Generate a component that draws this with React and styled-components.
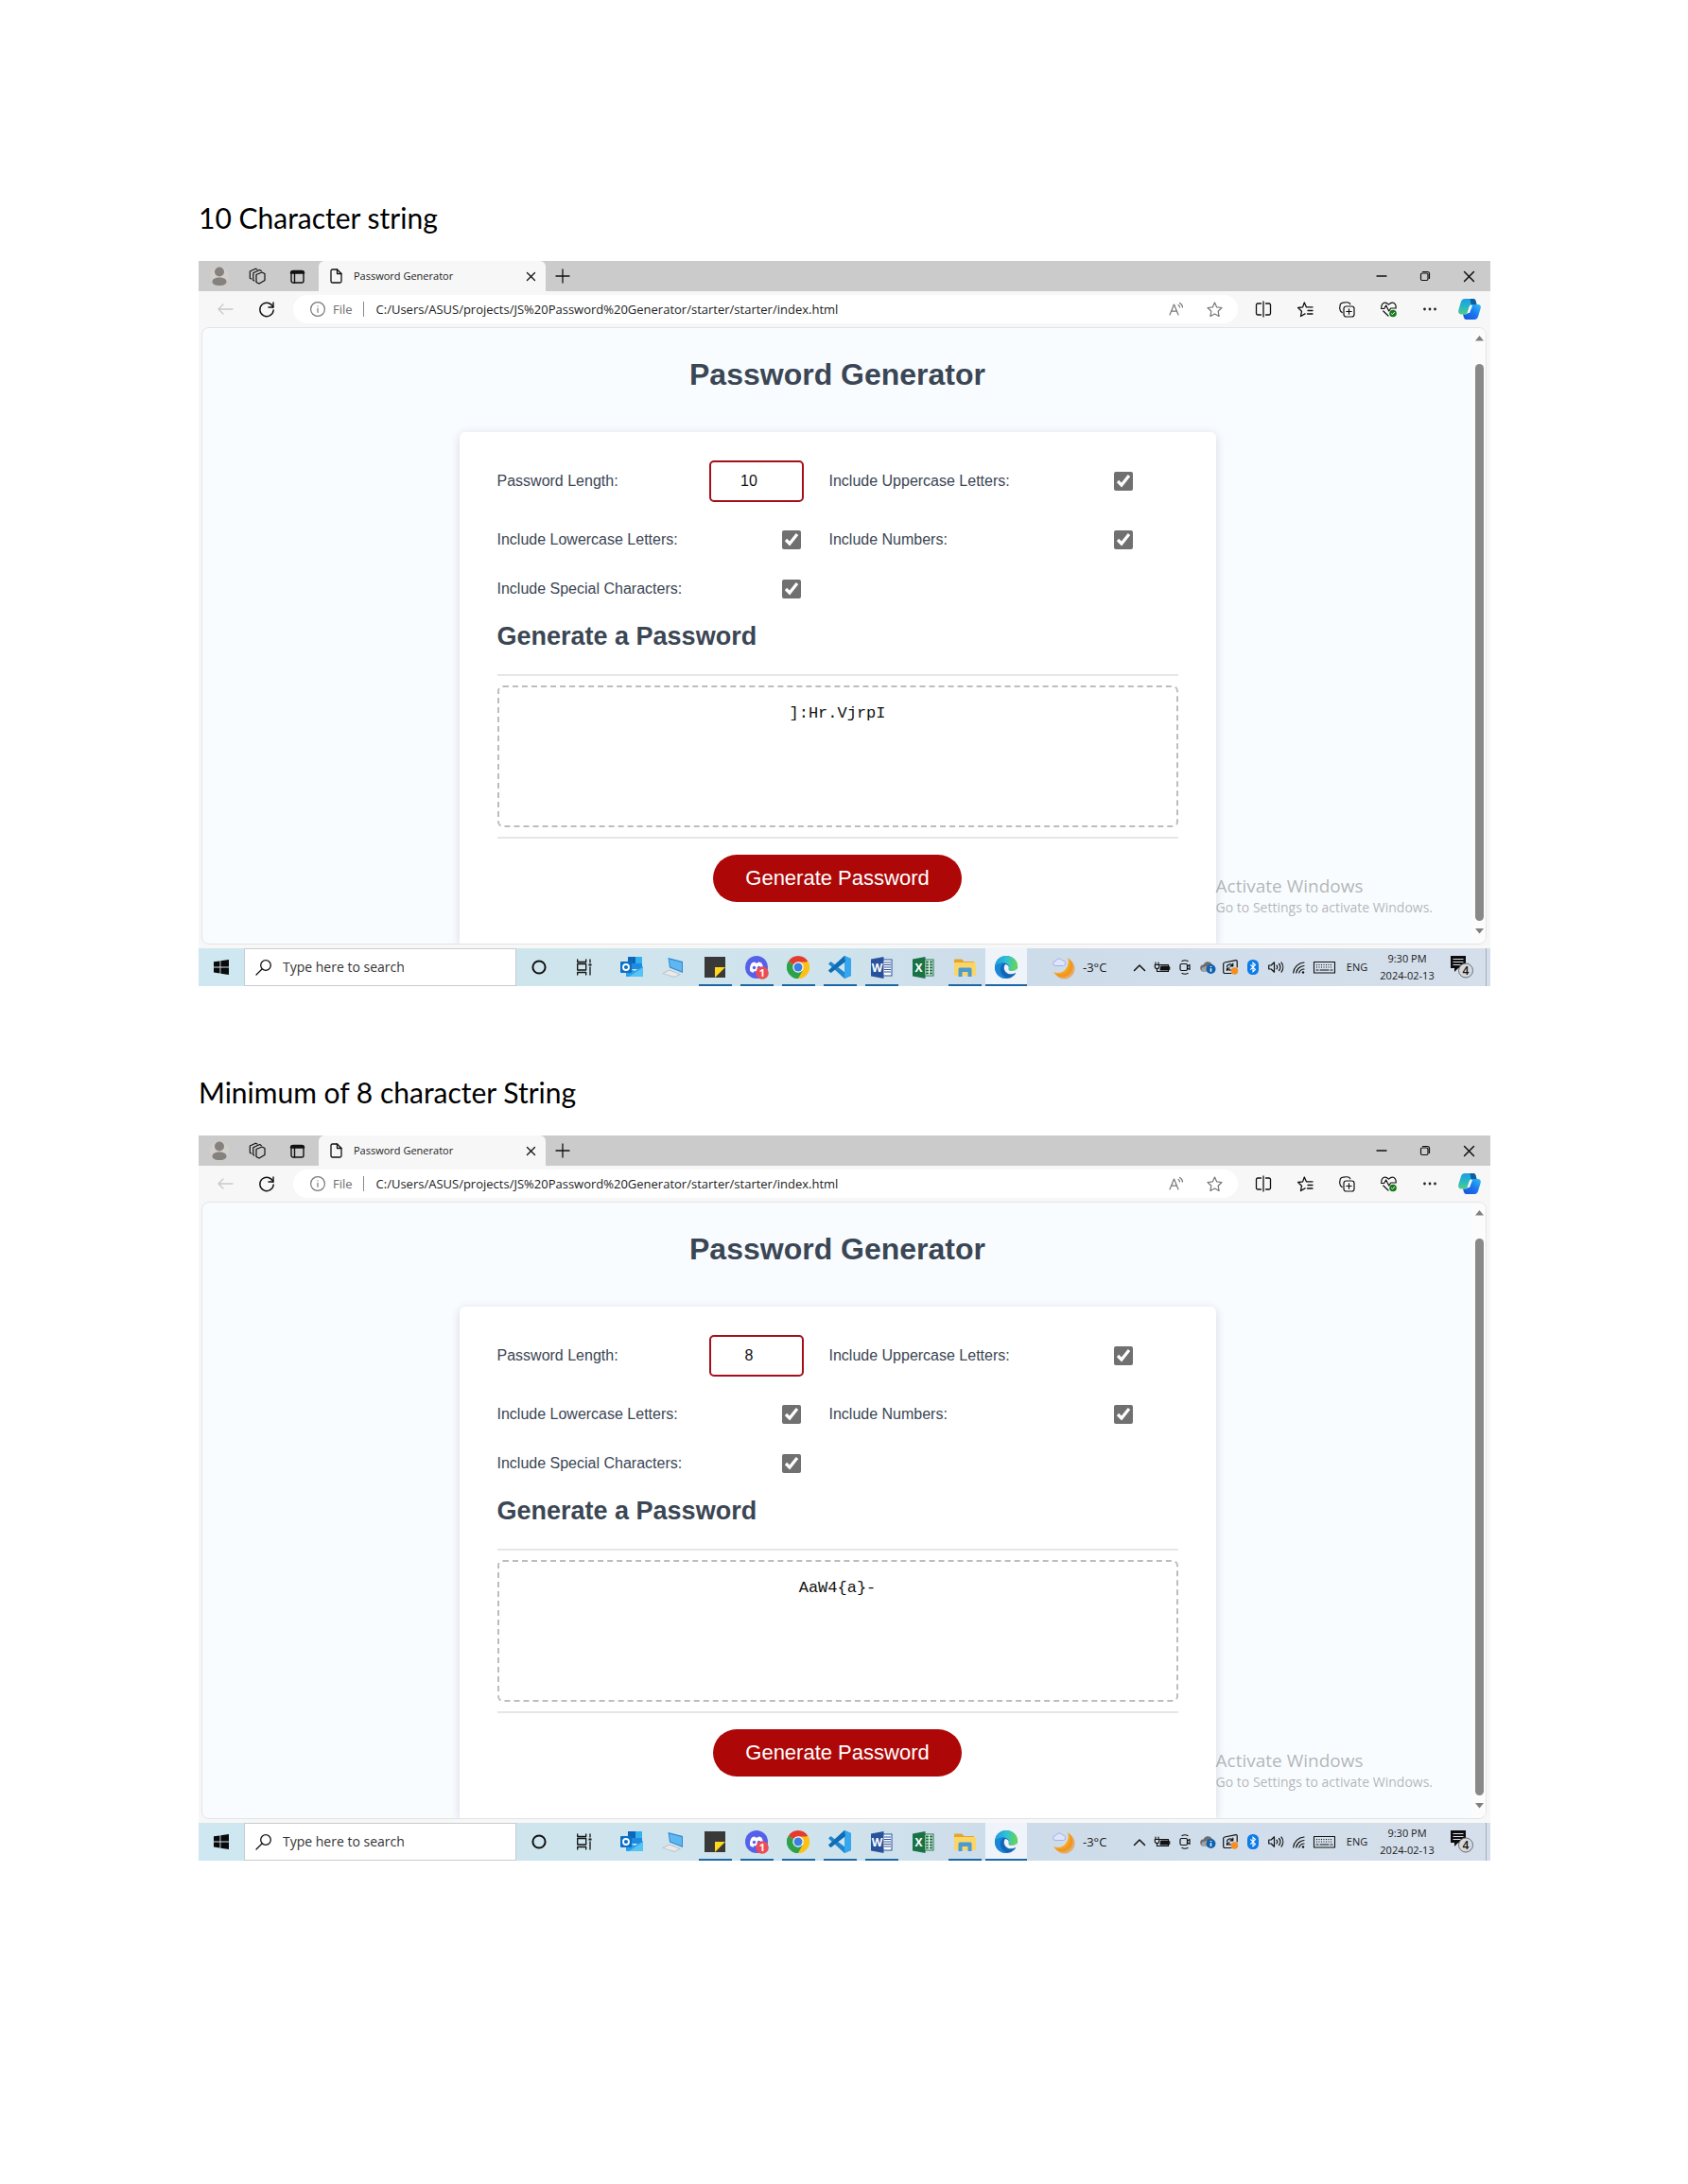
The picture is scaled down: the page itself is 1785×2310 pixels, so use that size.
import React, { useId } from "react";
import styled, { createGlobalStyle } from "styled-components";

const GlobalStyle = createGlobalStyle`
  *, *::before, *::after { box-sizing: border-box; }
  body { margin: 0; background: #fff; }
  button, input, textarea { font: inherit; color: inherit; margin: 0; }
`;

const UI = `"Open Sans", "Noto Sans", sans-serif`;
const ARIAL = `"Liberation Sans", Arial, sans-serif`;

/* ---------- document ---------- */

const Document = styled.main`
  display: flex;
  flex-direction: column;
  gap: 92px;
  padding: 210px 209px 300px 210px;
`;

const Figure = styled.section`
  display: flex;
  flex-direction: column;
  gap: 26px;
`;

const Caption = styled.h2`
  margin: 0;
  font: 400 30px/40px Lato, sans-serif;
  color: #000;
`;

const Desktop = styled.div`
  display: flex;
  flex-direction: column;
  background: #f7f7f7;
  font-family: ${UI};
  color: #1b1b1b;
`;

/* ---------- shared parts ---------- */

const Svg = styled.svg`
  display: block;
  flex: none;
  width: ${(p) => p.$w || 18}px;
  height: ${(p) => p.$h || p.$w || 18}px;
  overflow: visible;
`;

const Line = ({ w = 18, h, box, sw = 1.3, color = "#111", children }) => (
  <Svg
    $w={w}
    $h={h}
    viewBox={box || `0 0 ${w} ${h || w}`}
    fill="none"
    stroke={color}
    strokeWidth={sw}
    strokeLinecap="round"
    strokeLinejoin="round"
    aria-hidden="true"
  >
    {children}
  </Svg>
);

const IconButton = styled.button`
  display: flex;
  flex: none;
  align-items: center;
  justify-content: center;
  width: ${(p) => p.$w}px;
  height: 100%;
  padding: 0;
  border: 0;
  background: transparent;
`;

/* ---------- browser chrome ---------- */

const TabStrip = styled.div`
  display: flex;
  align-items: center;
  height: 32px;
  background: #cbcbcb;
`;

const ProfileTools = styled.div`
  display: flex;
  height: 100%;
  width: 127px;
  padding-left: 2px;
`;

const Tab = styled.div`
  display: flex;
  align-items: center;
  gap: 12px;
  width: 240px;
  height: 100%;
  padding: 0 4px 0 12px;
  border-radius: 6px 6px 0 0;
  background: #f7f7f7;
  font-size: 11px;
  line-height: 18px;
`;

const TabTitle = styled.span`
  flex: 1;
  white-space: nowrap;
`;

const WindowControls = styled.div`
  display: flex;
  height: 100%;
  margin-left: auto;
`;

const Toolbar = styled.div`
  display: flex;
  align-items: center;
  height: 38px;
  padding: 0 2px 0 6px;
`;

const AddressBar = styled.div`
  display: flex;
  align-items: center;
  flex: 1;
  height: 30px;
  margin: 0 5px 0 6px;
  padding: 0 5px 0 18px;
  border-radius: 15px;
  background: #fff;
  font-size: 13px;
  line-height: 20px;
`;

const Scheme = styled.span`
  margin-left: 8px;
  padding-right: 11px;
  border-right: 1px solid #8a8a8a;
  line-height: 16px;
  color: #6e6e6e;
`;

const UrlInput = styled.input`
  flex: 1;
  min-width: 0;
  padding: 0 0 0 13px;
  border: 0;
  background: transparent;
  outline: 0;
`;

/* ---------- web page ---------- */

const Viewport = styled.div`
  position: relative;
  display: flex;
  margin: 0 4px 4px 3px;
  border: 1px solid #e4e4e6;
  border-radius: 8px;
  background: #f8fcff;
  overflow: hidden;
`;

const PageBody = styled.div`
  display: flex;
  flex: 1;
  flex-direction: column;
  align-items: center;
  gap: 41px;
  padding-top: 29px;
  font-family: ${ARIAL};
  color: #3b4654;
`;

const PageTitle = styled.h1`
  margin: 0;
  font-size: 32px;
  line-height: 40px;
`;

const Card = styled.form`
  width: 100%;
  max-width: 800px;
  padding: 16px 40px 44px;
  border-radius: 6px 6px 0 0;
  background: #fff;
  box-shadow: 0 2px 10px rgba(30, 30, 60, 0.16);
`;

const Options = styled.div`
  display: grid;
  grid-template-columns: 45% 45%;
  column-gap: 27px;
  grid-template-rows: 72px;
  grid-auto-rows: 52px;
`;

const Option = styled.div`
  display: flex;
  align-items: center;
  justify-content: space-between;
  font-size: 16px;
  line-height: 20px;
`;

const LengthInput = styled.input`
  width: 100px;
  height: 44px;
  padding: 0 12px;
  border: 2px solid #a3101a;
  border-radius: 5px;
  background: #fff;
  color: #111;
  text-align: center;
  outline: 0;
`;

const Check = styled.input`
  width: 20px;
  height: 20px;
  margin-right: 3px;
  accent-color: #707070;
`;

const CardHeading = styled.h2`
  margin: 8px 0 24px;
  font-size: 27px;
  line-height: 32px;
`;

const Rule = styled.hr`
  height: 2px;
  margin: 0;
  border: 0;
  background: #e6e6e6;
`;

const Output = styled.textarea`
  display: block;
  width: 100%;
  height: 150px;
  margin: 10px 0;
  padding: 16px 20px;
  border: 2px dashed #bdbdbd;
  border-radius: 6px;
  background: #fff;
  color: #111;
  font: 17px/24px "Liberation Mono", monospace;
  text-align: center;
  resize: none;
  outline: 0;
`;

const Generate = styled.button`
  display: block;
  height: 50px;
  margin: 17px auto 0;
  padding: 0 34px;
  border: 0;
  border-radius: 25px;
  background: #ae0707;
  color: #fff;
  font-size: 22px;
  line-height: 26px;
`;

const ScrollBar = styled.div`
  display: flex;
  flex-direction: column;
  align-items: center;
  justify-content: space-between;
  width: 14px;
  padding: 8px 0 10px;
  background: #fcfcfc;
`;

const ScrollThumb = styled.div`
  flex: 1;
  width: 9px;
  margin: 24px 0 8px;
  border-radius: 5px;
  background: #898989;
`;

const Watermark = styled.div`
  position: absolute;
  right: 56px;
  bottom: 28px;
  color: rgba(110, 110, 110, 0.5);
  font-size: 14px;
  line-height: 20px;
  pointer-events: none;
`;

const WatermarkTitle = styled.div`
  font-size: 19px;
  line-height: 26px;
`;

/* ---------- taskbar ---------- */

const TaskBar = styled.div`
  display: flex;
  height: 40px;
  background: linear-gradient(90deg, #cfe7f0 0%, #cfe3ec 50%, #cddcea 62%, #d5dfeb 100%);
`;

const SearchBox = styled.label`
  display: flex;
  align-items: center;
  gap: 12px;
  width: 288px;
  padding: 0 11px;
  border: 1px solid #c4ccd0;
  background: #fff;
`;

const SearchInput = styled.input`
  flex: 1;
  min-width: 0;
  padding: 0;
  border: 0;
  background: transparent;
  outline: 0;
  font-size: 14px;
  line-height: 20px;
  &::placeholder { color: #333; opacity: 1; }
`;

const Apps = styled.div`
  display: flex;
  margin-left: 4px;
`;

const AppButton = styled.button`
  display: flex;
  align-items: center;
  justify-content: center;
  width: 44px;
  padding: 0;
  border: 0;
  background: ${(p) => (p.$active ? "#eef4f9" : "transparent")};
  box-shadow: ${(p) => (p.$active ? "inset 0 -2px #1c68a6" : "none")};
  ${(p) =>
    p.$open &&
    `background: linear-gradient(#1c68a6, #1c68a6) center bottom / 35px 2px no-repeat;`}
`;

const Tray = styled.div`
  display: flex;
  align-items: center;
  margin-left: auto;
  font-size: 11px;
  line-height: 18px;
`;

const Weather = styled.button`
  display: flex;
  align-items: center;
  gap: 9px;
  width: 80px;
  padding: 0;
  border: 0;
  background: transparent;
  font-size: 13px;
`;

const Language = styled.button`
  width: 40px;
  padding: 0;
  border: 0;
  background: transparent;
`;

const Clock = styled.time`
  width: 66px;
  text-align: center;
  white-space: nowrap;
`;

const Notifications = styled.button`
  width: 51px;
  height: 100%;
  display: flex;
  align-items: center;
  justify-content: center;
  padding: 0;
  border: 0;
  border-right: 1px solid #a5aebb;
  margin-right: 4px;
  background: transparent;
`;

/* ---------- chrome icons ---------- */

const Avatar = () => (
  <Svg $w={20} viewBox="0 0 20 20">
    <circle cx="10" cy="10" r="10" fill="#d3d0cc" />
    <circle cx="10" cy="5.5" r="5" fill="#85817d" />
    <path d="M2.5 16c0-3 3-4.500 7.500-4.500s7.500 1.500 7.500 4.500c0 2.500-3 4-7.500 4s-7.500-1.500-7.500-4z" fill="#85817d" />
  </Svg>
);
const Workspaces = () => (
  <Line w={18} sw={1.2}>
    <path d="M8 7.500l6-2.500 3 1.500v7l-6 3.500-3-1.500z" />
    <path d="M5.800 14l-1-.6V5.700L11.500 2.500l1.800 1" />
    <path d="M2.800 12l-1.500-.8V4l6-2.800L9 2" />
  </Line>
);
const TabActions = () => (
  <Line w={15} sw={1.4}>
    <rect x="1" y="1.5" width="13" height="12.5" rx="2" />
    <path d="M1 3.500h13M1.500 2.500h12" strokeWidth="2.6" />
    <path d="M4.500 4v10" />
  </Line>
);
const FileIcon = () => (
  <Line w={13} h={16} sw={1.3}>
    <path d="M2.500 1h5L12 5.500v8a1.500 1.500 0 0 1-1.500 1.500h-8A1.500 1.500 0 0 1 1 13.500v-11A1.500 1.500 0 0 1 2.500 1z" />
    <path d="M7.500 1v4.500H12" />
  </Line>
);
const Cross = ({ w = 9 }) => (
  <Line w={w} box="0 0 10 10" sw={1.4}>
    <path d="M.5.5l9 9M9.500.5l-9 9" />
  </Line>
);
const Plus = () => (
  <Line w={14}>
    <path d="M7 0v14M0 7h14" />
  </Line>
);
const Minimise = () => (
  <Line w={10}>
    <path d="M0 5h10" />
  </Line>
);
const Restore = () => (
  <Line w={10} sw={1.2}>
    <rect x=".5" y="2" width="7.5" height="7.5" rx="1.5" />
    <path d="M2.500.5h5a2 2 0 0 1 2 2v5" />
  </Line>
);
const Back = () => (
  <Line w={17} h={12} color="#c9c9c9">
    <path d="M6 1L1 6l5 5M1 6h15" />
  </Line>
);
const Reload = () => (
  <Line w={16} sw={1.4}>
    <path d="M14.800 6A7.200 7.200 0 1 0 15.200 9" />
    <path d="M15 1v5h-5" />
  </Line>
);
const Info = () => (
  <Line w={16} color="#777" sw={1.2}>
    <circle cx="8" cy="8" r="7.4" />
    <path d="M8 7.300v4M8 4.800v.1" />
  </Line>
);
const ReadAloud = () => (
  <Line w={16} color="#777" sw={1.2}>
    <path d="M1 14L5.500 3 10 14M2.600 10.200h5.800M10 3.500a3 3 0 0 1 1.500 2.500M11.500 1.500A5.500 5.500 0 0 1 14.500 6" />
  </Line>
);
const Star = () => (
  <Line w={17} color="#777" sw={1.2}>
    <path d="M8.500 1l2.200 4.900 5.300.6-3.900 3.700 1 5.300-4.600-2.600-4.600 2.600 1-5.300L1 6.500l5.300-.6z" />
  </Line>
);
const Split = () => (
  <Line w={16} sw={1.3}>
    <path d="M5.500 2H2a1.500 1.500 0 0 0-1.500 1.500v9A1.500 1.500 0 0 0 2 14h3.500M10.500 2H14a1.500 1.500 0 0 1 1.500 1.500v9A1.500 1.500 0 0 1 14 14h-3.500M8 0v16" />
  </Line>
);
const Favorites = () => (
  <Line w={17} sw={1.3}>
    <path d="M9.500 5.900L7.300 1 5.600 5.900l-5 .6 3.900 3.700-1 5.300 4.600-2.600M9.500 5.900h6.500M11 9.500h5M10.500 13H16" />
  </Line>
);
const Collections = () => (
  <Line w={17} sw={1.2}>
    <rect x="5" y="5" width="11" height="11" rx="2.5" />
    <path d="M10.500 7.800v5.400M7.800 10.500h5.400M3.200 11.500L1.500 10C.5 8 .8 4.500 1.300 3c.5-1.200 1.500-1.600 3-1.800C7 .7 9.500.6 10.500 1.200c.8.500 1 1 1.300 1.600" />
  </Line>
);
const Essentials = () => (
  <Line w={17} sw={1.2}>
    <path d="M.8 6.500C.5 3 2.500 1.200 4.500 1.200c1.800 0 3 1 4 2 1-1 2.200-2 4-2 2 0 4 1.800 3.700 5.300M2.800 10l5.200 5M.5 7.500h3.200l2-3.500 3 6 2-3h5.500" />
    <circle cx="13" cy="12.5" r="3.8" fill="#187a1e" stroke="none" />
    <path d="M11.500 12.800l1 .8 2-2.200" stroke="#fff" strokeWidth="1" />
  </Line>
);
const Dots = () => (
  <Svg $w={14} viewBox="0 0 14 14">
    <circle cx="1.500" cy="7" r="1.400" fill="#222" />
    <circle cx="7" cy="7" r="1.400" fill="#222" />
    <circle cx="12.500" cy="7" r="1.400" fill="#222" />
  </Svg>
);
const Copilot = () => {
  const id = useId();
  return (
    <Svg $w={24} viewBox="0 0 24 24">
      <defs>
        <linearGradient id={`${id}a`} x1="0" y1="0" x2="0" y2="1">
          <stop offset="0" stopColor="#1c9de8" />
          <stop offset=".5" stopColor="#25b7c4" />
          <stop offset="1" stopColor="#4fce85" />
        </linearGradient>
        <linearGradient id={`${id}b`} x1="1" y1="0" x2="0" y2="1">
          <stop offset="0" stopColor="#2dc0f4" />
          <stop offset=".5" stopColor="#1c74f0" />
          <stop offset="1" stopColor="#1552d8" />
        </linearGradient>
      </defs>
      <path d="M7 1h9c1.500 0 2.200 1 2.600 2.400L19.500 7H15c-2 0-3 1-3.600 3l-1.600 5.500C9.300 17 8.500 17.500 7 17.500H3.500C.8 17.500-.3 15.500.3 13L3 4c.7-2 2-3 4-3z" fill={`url(#${id}a)`} />
      <path d="M12.500 1H16c1.500 0 2.200 1 2.600 2.400L19.500 7H15l-1.500-.2z" fill="#0e5f9e" />
      <path d="M17 23H8.500c-1.500 0-2.200-1-2.600-2.400L5 17.500h2.500c2 0 3-1 3.600-3L12.700 9c.5-1.500 1.300-2 2.800-2h5c2.700 0 3.800 1.500 3.200 4L21 20c-.7 2-2 3-4 3z" fill={`url(#${id}b)`} />
      <path d="M13 8h2L12 16h-2.200z" fill="#fff" />
    </Svg>
  );
};
const Arrow = ({ down }) => (
  <Svg $w={9} $h={6} viewBox="0 0 9 6">
    <path d={down ? "M0 0h9L4.500 5.500z" : "M0 5.500h9L4.500 0z"} fill="#808080" />
  </Svg>
);

/* ---------- taskbar icons ---------- */

const Glyph = styled.text`
  font: 700 ${(p) => p.$s}px ${UI};
  fill: #fff;
  text-anchor: middle;
`;

const WindowsLogo = () => (
  <Svg $w={16} viewBox="0 0 16 16">
    <path d="M0 2.300l6.500-.9v6.100H0zM7.400 1.300L16 0v7.500H7.400zM0 8.400h6.500v6.100L0 13.600zM7.400 8.400H16V16l-8.600-1.200z" fill="#0a0a0a" />
  </Svg>
);
const SearchIcon = () => (
  <Line w={17} sw={1.3}>
    <circle cx="11" cy="6" r="5.3" />
    <path d="M7 10L1 16" />
  </Line>
);
const Cortana = () => (
  <Line w={16} sw={2}>
    <circle cx="8" cy="8" r="6.6" />
  </Line>
);
const TaskView = () => (
  <Line w={16} sw={1.3}>
    <path d="M.7 0v2.500h9V0M.7 16v-2.500h9V16M.7 4.500h9v6.500h-9zM14 0v3M14 8v8" />
    <path d="M14 4.500v2" strokeWidth="3" strokeLinecap="butt" />
  </Line>
);
const Outlook = () => (
  <Svg $w={24} viewBox="0 0 24 24">
    <rect x="8" y="1" width="15" height="13" fill="#1f8be0" />
    <path d="M8 1h8v7H8z" fill="#1067b8" />
    <path d="M16 1h7v7h-7z" fill="#32b0f0" />
    <path d="M6 11l9 5 9-5v10a1 1 0 0 1-1 1H7a1 1 0 0 1-1-1z" fill="#2a9ee8" />
    <path d="M24 12L9 22h14a1 1 0 0 0 1-1z" fill="#54c3f5" />
    <rect x="0" y="6" width="12" height="12" rx="1" fill="#0d70c8" />
    <circle cx="6" cy="12" r="3" fill="none" stroke="#fff" strokeWidth="1.8" />
  </Svg>
);
const RemotePc = () => (
  <Svg $w={24} viewBox="0 0 24 24">
    <path d="M0 18.500l8-4 12 5-7 3.500z" fill="#b9bfc4" />
    <path d="M2 18.500l6-3 10 4-5 2.500z" fill="#e8eaec" />
    <path d="M6.500 2L22 6v12L8 12.500z" fill="#2f86cf" />
    <path d="M7.500 3.500L21 7v9.500L9 11.800z" fill="#5fb7f2" />
  </Svg>
);
const Sticky = () => (
  <Svg $w={22} viewBox="0 0 22 22">
    <path d="M0 0h22v22H0z" fill="#393939" />
    <path d="M11 11h11L11 22z" fill="#ffd81a" />
  </Svg>
);
const Discord = () => (
  <Svg $w={24} viewBox="0 0 24 24">
    <circle cx="12" cy="12" r="12" fill="#5661ea" />
    <path d="M5 16c-.5-4 .8-7 2-8.500 1.500-.8 2.500-1 3.200-1l.6 1h2.600l.6-1c1 0 2 .3 3.200 1 1.500 2 2.300 5 2 8.500-1.500 1-2.500 1.500-3.800 1.700l-.8-1.400H9.500l-.8 1.400C7.500 17.500 6.500 17 5 16z" fill="#fff" />
    <circle cx="9.5" cy="12.5" r="1.7" fill="#5661ea" />
    <circle cx="14.500" cy="12.500" r="1.700" fill="#5661ea" />
    <circle cx="18" cy="18" r="6.800" fill="#ed4b55" />
    <Glyph $s={11} x="18" y="22">1</Glyph>
  </Svg>
);
const Chrome = () => (
  <Svg $w={24} viewBox="0 0 24 24">
    <path d="M12 12L1.610 6A12 12 0 0 1 22.390 6z" fill="#e33b2e" />
    <path d="M12 12l10.390-6A12 12 0 0 1 12 24z" fill="#fbc116" />
    <path d="M12 12v12A12 12 0 0 1 1.610 6z" fill="#2da14b" />
    <path d="M12 6.500h10.600A12 12 0 0 1 12 24l5-9z" fill="#fbc116" />
    <path d="M7.200 14.800L1.610 6A12 12 0 0 0 12 24l4.500-8z" fill="#2da14b" />
    <circle cx="12" cy="12" r="5.7" fill="#fff" />
    <circle cx="12" cy="12" r="4.5" fill="#3d7de8" />
  </Svg>
);
const VsCode = () => (
  <Svg $w={24} viewBox="0 0 24 24">
    <path d="M17 0l7 3v18l-7 3L0 8.500 2.500 6 18 18V6L2.500 18 0 15.500z" fill="#1f86cf" />
    <path d="M17 0l7 3v18l-7 3z" fill="#36a6ee" />
    <path d="M17 0l1 6L2.500 18 0 15.500z" fill="#0f6db4" />
  </Svg>
);
const Office = ({ letter, color, grid }) => (
  <Svg $w={23} viewBox="0 0 23 23">
    <rect x="12" y="3" width="10" height="17" fill="#fff" stroke={color} />
    <path
      d={
        grid
          ? "M14 5.500h3M18 5.500h3M14 8.500h3M18 8.500h3M14 11.500h3M18 11.500h3M14 14.500h3M18 14.500h3M14 17.500h3M18 17.500h3"
          : "M14 6h7M14 8.500h7M14 11h7M14 13.500h7M14 16h7"
      }
      stroke={color}
      strokeWidth={grid ? 2 : 1.2}
    />
    <path d="M0 2.500L13.500 0v23L0 20.500z" fill={color} />
    <Glyph $s={12} x="6.5" y="16">{letter}</Glyph>
  </Svg>
);
const Explorer = () => (
  <Svg $w={23} viewBox="0 0 23 23">
    <path d="M0 3.500A1 1 0 0 1 1 2.500h7l2.500 2.500H21v5H0z" fill="#e3a52c" />
    <path d="M1 6h21a1 1 0 0 1 1 1v13H1a1 1 0 0 1-1-1V7a1 1 0 0 1 1-1z" fill="#fbd667" />
    <path d="M4.500 21v-8a1.500 1.500 0 0 1 1.500-1.500h11a1.500 1.500 0 0 1 1.500 1.500v8h-4v-5h-6v5z" fill="#4b9bd0" />
  </Svg>
);
const Edge = () => {
  const id = useId();
  return (
    <Svg $w={24} viewBox="0 0 24 24">
      <defs>
        <linearGradient id={id} x1="0" y1=".3" x2="1" y2=".4">
          <stop offset="0" stopColor="#1b9de2" />
          <stop offset=".5" stopColor="#2fc1d6" />
          <stop offset="1" stopColor="#66d84f" />
        </linearGradient>
      </defs>
      <circle cx="12" cy="12" r="12" fill="#1266b8" />
      <path d="M0 12C.5 4.500 5.500 0 12 0c7 0 12 5 12 10.500 0 3.500-2.500 5.500-5.500 5.500-2.500 0-4.500-.8-4-2 1.500-2.500-.5-6.500-5-6.500C4.500 7.500.5 10 0 12z" fill={`url(#${id})`} />
      <path d="M0 12c.5-2 4-4.500 9.500-4.500-3 2-4.500 6-3 10 1 3 4 5.500 7.500 6.400C6 25 0 19 0 12z" fill="#1a86d6" />
      <path d="M11 9c-2 2.500-1.500 6 1 8.500 2.500 2.300 6.500 2.500 10 .5l1.500.5L24 13l-3 2.500c-2.500 1-7 .5-6.500-1.500 1-2 0-4.500-3.500-5z" fill="#eef4f9" />
    </Svg>
  );
};
const Moon = () => (
  <Svg $w={23} viewBox="0 0 23 23">
    <path d="M16 1a11 11 0 1 1-15 15c5 2 10 1 13-3s3.500-8 2-12z" fill="#f6a623" />
    <path d="M18 3c2 5 0 10-3 13s-8 3-12 2a11 11 0 1 0 15-15z" fill="#f08c1a" opacity=".6" />
    <path d="M3 9.500a2.500 2.500 0 0 1 .3-5A4 4 0 0 1 10.500 4a2.800 2.800 0 0 1 1 5.500z" fill="#dfe6fb" stroke="#a3aeea" />
  </Svg>
);
const Chevron = () => (
  <Line w={12} h={7} sw={1.5}>
    <path d="M.5 6.500L6 1l5.500 5.500" />
  </Line>
);
const Battery = () => (
  <Line w={16} h={12} sw={1.2}>
    <path d="M5.500 3.500h9v7h-8" />
    <path d="M7 5h6.500v4H6z" fill="#111" />
    <path d="M15.700 5.500v3M1 1v2.500M4 1v2.500M.3 3.500h4.500v2A2 2 0 0 1 2.500 7.500 2 2 0 0 1 .3 5.500zM2.500 7.500v3h3" />
  </Line>
);
const MeetNow = () => (
  <Line w={12} h={16} sw={1.2}>
    <rect x="1" y="4.5" width="7.5" height="7" rx="1.5" />
    <path d="M8.500 7l2.500-1.500v5L8.500 9M3 1.500c2-1 4-1 6 0M3 14.500c2 1 4 1 6 0" />
  </Line>
);
const Cloud = () => (
  <Svg $w={17} $h={14} viewBox="0 0 17 14">
    <path d="M4 11.500a3.500 3.500 0 0 1-.5-7A5 5 0 0 1 12 3l3 4-6 4.500z" fill="#6d6d6d" />
    <path d="M4 12a2.500 2.500 0 0 1 0-5c2-1.500 4-1.500 6 0v5z" fill="#a3a3a3" />
    <circle cx="11.5" cy="9" r="5" fill="#0f62ae" />
    <path d="M11.500 8.300v3.500M11.500 6v1" stroke="#fff" strokeWidth="1.5" />
  </Svg>
);
const SyncApp = () => (
  <Line w={17} h={16} sw={1.2}>
    <path d="M9 14.500H2A1.500 1.500 0 0 1 .7 13V4.500A1.500 1.500 0 0 1 2 3l12-2.300a1 1 0 0 1 1.200 1V8M4.500 7.500A3.500 3.500 0 0 1 9 5l1.500 1.500M10.800 4v2.800H8M4.500 11.500V9h2.800M4.700 9.500A3.500 3.500 0 0 0 8.500 11" />
    <circle cx="12.5" cy="12" r="3.7" fill="#f78f1e" stroke="none" />
  </Line>
);
const Bluetooth = () => (
  <Svg $w={12} $h={16} viewBox="0 0 12 16">
    <rect width="12" height="16" rx="5.5" fill="#0b7ce8" />
    <path d="M3.300 5.300L8.500 10.500 6 12.800V3.200L8.500 5.500 3.300 10.700" fill="none" stroke="#fff" strokeWidth="1.1" />
  </Svg>
);
const Speaker = () => (
  <Line w={17} h={12} sw={1.2}>
    <path d="M.7 4h2.500L6.500.8v10.400L3.200 8H.7zM9 4.200a2.500 2.500 0 0 1 0 3.600M11.500 2.500a5 5 0 0 1 0 7M14 1a8 8 0 0 1 0 10" />
  </Line>
);
const Wifi = () => (
  <Line w={13} h={13} sw={1.2}>
    <path d="M.7 12A12 12 0 0 1 12 1M3.700 12A9 9 0 0 1 12 4.500M6.700 12A6 6 0 0 1 12 8" />
    <circle cx="11" cy="11.5" r="1.2" fill="#111" stroke="none" />
  </Line>
);
const Keyboard = () => (
  <Line w={23} h={12} sw={1.1}>
    <rect x=".5" y=".5" width="22" height="11.5" />
    <path d="M3 3.500h17M3 6h17" strokeDasharray="1 1.5" strokeLinecap="butt" />
    <path d="M3 9h2M7 9h9M18 9h2" />
  </Line>
);
const NoteIcon = () => (
  <Svg $w={24} $h={24} viewBox="0 0 24 24">
    <path d="M0 0h16v13H8l-4 4v-4H0z" fill="#0c0c0c" />
    <path d="M2.500 3.500h11M2.500 6.500h11M2.500 9.500h8" stroke="#d5dfeb" strokeWidth="1.2" />
    <circle cx="16" cy="15.5" r="7.5" fill="#d6d8dc" stroke="#6c6c6c" />
    <text x="16" y="20" textAnchor="middle" fontFamily="Open Sans, sans-serif" fontWeight="600" fontSize="12" fill="#111">4</text>
  </Svg>
);

/* ---------- composition ---------- */

const tools = [
  ["Split screen", Split],
  ["Favorites", Favorites],
  ["Collections", Collections],
  ["Browser essentials", Essentials],
  ["More", Dots],
];

const apps = [
  ["Outlook", <Outlook />],
  ["Remote PC", <RemotePc />],
  ["Sticky Notes", <Sticky />, "open"],
  ["Discord", <Discord />, "open"],
  ["Chrome", <Chrome />, "open"],
  ["VS Code", <VsCode />, "open"],
  ["Word", <Office letter="W" color="#26539c" />, "open"],
  ["Excel", <Office letter="X" color="#1a7244" grid />],
  ["File Explorer", <Explorer />, "open"],
  ["Edge", <Edge />, "active"],
];

const trayIcons = [
  ["Show hidden icons", Chevron],
  ["Battery", Battery],
  ["Meet Now", MeetNow],
  ["OneDrive", Cloud],
  ["Updates", SyncApp],
  ["Bluetooth", Bluetooth],
  ["Volume", Speaker],
  ["Network", Wifi],
];

function Browser() {
  return (
    <>
      <TabStrip>
        <ProfileTools>
          <IconButton $w={40} aria-label="Profile"><Avatar /></IconButton>
          <IconButton $w={40} aria-label="Workspaces"><Workspaces /></IconButton>
          <IconButton $w={44} aria-label="Tab actions"><TabActions /></IconButton>
        </ProfileTools>
        <Tab>
          <FileIcon />
          <TabTitle>Password Generator</TabTitle>
          <IconButton $w={24} aria-label="Close tab"><Cross /></IconButton>
        </Tab>
        <IconButton $w={35} aria-label="New tab"><Plus /></IconButton>
        <WindowControls>
          <IconButton $w={46} aria-label="Minimize"><Minimise /></IconButton>
          <IconButton $w={46} aria-label="Restore"><Restore /></IconButton>
          <IconButton $w={46} aria-label="Close"><Cross w={11} /></IconButton>
        </WindowControls>
      </TabStrip>
      <Toolbar>
        <IconButton $w={44} aria-label="Back"><Back /></IconButton>
        <IconButton $w={44} aria-label="Reload"><Reload /></IconButton>
        <AddressBar>
          <Info />
          <Scheme>File</Scheme>
          <UrlInput
            aria-label="Address"
            readOnly
            value="C:/Users/ASUS/projects/JS%20Password%20Generator/starter/starter/index.html"
          />
          <IconButton $w={40} aria-label="Read aloud"><ReadAloud /></IconButton>
          <IconButton $w={40} aria-label="Add to favorites"><Star /></IconButton>
        </AddressBar>
        {tools.map(([label, Icon]) => (
          <IconButton key={label} $w={44} aria-label={label}><Icon /></IconButton>
        ))}
        <IconButton $w={40} aria-label="Copilot"><Copilot /></IconButton>
      </Toolbar>
    </>
  );
}

function CheckOption({ label }) {
  const id = useId();
  return (
    <Option>
      <label htmlFor={id}>{label}</label>
      <Check id={id} type="checkbox" defaultChecked />
    </Option>
  );
}

function GeneratorPage({ length, password }) {
  const id = useId();
  return (
    <Viewport>
      <PageBody>
        <PageTitle>Password Generator</PageTitle>
        <Card onSubmit={(e) => e.preventDefault()}>
          <Options>
            <Option>
              <label htmlFor={id}>Password Length:</label>
              <LengthInput id={id} type="number" defaultValue={length} />
            </Option>
            <CheckOption label="Include Uppercase Letters:" />
            <CheckOption label="Include Lowercase Letters:" />
            <CheckOption label="Include Numbers:" />
            <CheckOption label="Include Special Characters:" />
          </Options>
          <CardHeading>Generate a Password</CardHeading>
          <Rule />
          <Output aria-label="Generated password" readOnly value={password} />
          <Rule />
          <Generate type="submit">Generate Password</Generate>
        </Card>
      </PageBody>
      <ScrollBar>
        <Arrow />
        <ScrollThumb />
        <Arrow down />
      </ScrollBar>
      <Watermark>
        <WatermarkTitle>Activate Windows</WatermarkTitle>
        Go to Settings to activate Windows.
      </Watermark>
    </Viewport>
  );
}

function WindowsTaskBar() {
  return (
    <TaskBar>
      <IconButton $w={48} aria-label="Start"><WindowsLogo /></IconButton>
      <SearchBox>
        <SearchIcon />
        <SearchInput placeholder="Type here to search" aria-label="Search" />
      </SearchBox>
      <IconButton $w={48} aria-label="Cortana"><Cortana /></IconButton>
      <IconButton $w={48} aria-label="Task view"><TaskView /></IconButton>
      <Apps>
        {apps.map(([label, icon, state]) => (
          <AppButton key={label} aria-label={label} $open={state === "open"} $active={state === "active"}>
            {icon}
          </AppButton>
        ))}
      </Apps>
      <Tray>
        <Weather><Moon />-3°C</Weather>
        {trayIcons.map(([label, Icon]) => (
          <IconButton key={label} $w={24} aria-label={label}><Icon /></IconButton>
        ))}
        <IconButton $w={30} aria-label="Touch keyboard"><Keyboard /></IconButton>
        <Language>ENG</Language>
        <Clock>9:30 PM<br />2024-02-13</Clock>
        <Notifications aria-label="Notifications"><NoteIcon /></Notifications>
      </Tray>
    </TaskBar>
  );
}

const shots = [
  { caption: "10 Character string", length: 10, password: "]:Hr.VjrpI" },
  { caption: "Minimum of 8 character String", length: 8, password: "AaW4{a}-" },
];

export default function App() {
  return (
    <>
      <GlobalStyle />
      <Document>
        {shots.map((shot) => (
          <Figure key={shot.caption}>
            <Caption>{shot.caption}</Caption>
            <Desktop>
              <Browser />
              <GeneratorPage length={shot.length} password={shot.password} />
              <WindowsTaskBar />
            </Desktop>
          </Figure>
        ))}
      </Document>
    </>
  );
}
